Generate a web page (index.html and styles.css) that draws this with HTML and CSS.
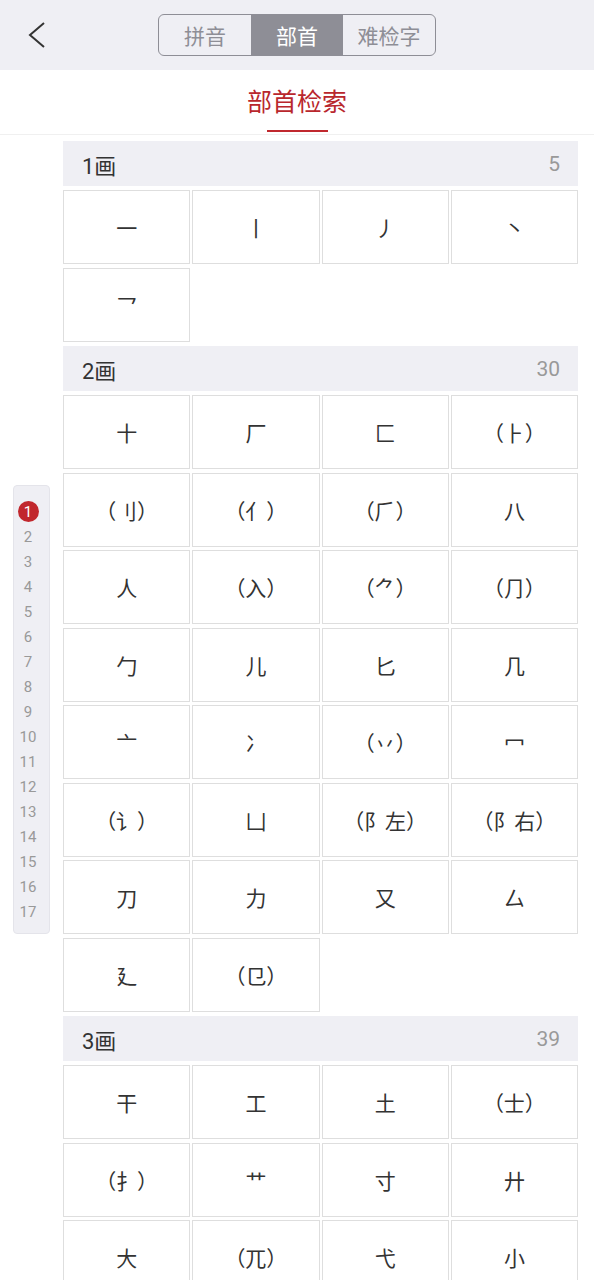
FILE: index.html
```html
<!DOCTYPE html>
<html lang="zh-CN">
  <head>
    <meta charset="UTF-8" />
    <meta name="viewport" content="width=device-width, initial-scale=1.0" />
    <title>部首检索</title>
    <link rel="stylesheet" href="styles.css">
  </head>
  <body>
    <div class="topbar">
      <button class="back">
        <svg width="22" height="30" viewBox="0 0 22 30"><path d="M18 3 L4 15 L18 27" fill="none" stroke="#333" stroke-width="2"/></svg>
      </button>
      <div class="segments">
        <span class="seg">拼音</span>
        <span class="seg seg-active">部首</span>
        <span class="seg">难检字</span>
      </div>
    </div>

    <div class="title">
      <span class="title-text">部首检索</span>
    </div>

    <div class="content">
      <div class="section">
        <div class="section-head"><span class="strokes">1画</span><span class="count">5</span></div>
        <div class="grid">
          <div class="cell">一</div>
          <div class="cell">丨</div>
          <div class="cell">丿</div>
          <div class="cell">丶</div>
          <div class="cell">乛</div>
        </div>
      </div>

      <div class="section">
        <div class="section-head"><span class="strokes">2画</span><span class="count">30</span></div>
        <div class="grid">
          <div class="cell">十</div>
          <div class="cell">厂</div>
          <div class="cell">匚</div>
          <div class="cell">（⺊）</div>
          <div class="cell">（刂）</div>
          <div class="cell">（亻）</div>
          <div class="cell">（⺁）</div>
          <div class="cell">八</div>
          <div class="cell">人</div>
          <div class="cell">（入）</div>
          <div class="cell">（⺈）</div>
          <div class="cell">（⺆）</div>
          <div class="cell">勹</div>
          <div class="cell">儿</div>
          <div class="cell">匕</div>
          <div class="cell">几</div>
          <div class="cell">亠</div>
          <div class="cell">冫</div>
          <div class="cell">（丷）</div>
          <div class="cell">冖</div>
          <div class="cell">（讠）</div>
          <div class="cell">凵</div>
          <div class="cell">（阝左）</div>
          <div class="cell">（阝右）</div>
          <div class="cell">刀</div>
          <div class="cell">力</div>
          <div class="cell">又</div>
          <div class="cell">厶</div>
          <div class="cell">廴</div>
          <div class="cell">（㔾）</div>
        </div>
      </div>

      <div class="section">
        <div class="section-head"><span class="strokes">3画</span><span class="count">39</span></div>
        <div class="grid">
          <div class="cell">干</div>
          <div class="cell">工</div>
          <div class="cell">土</div>
          <div class="cell">（士）</div>
          <div class="cell">（扌）</div>
          <div class="cell">艹</div>
          <div class="cell">寸</div>
          <div class="cell">廾</div>
          <div class="cell">大</div>
          <div class="cell">（兀）</div>
          <div class="cell">弋</div>
          <div class="cell">小</div>
        </div>
      </div>
    </div>

    <div class="index">
      <span class="idx idx-active">1</span>
      <span class="idx">2</span>
      <span class="idx">3</span>
      <span class="idx">4</span>
      <span class="idx">5</span>
      <span class="idx">6</span>
      <span class="idx">7</span>
      <span class="idx">8</span>
      <span class="idx">9</span>
      <span class="idx">10</span>
      <span class="idx">11</span>
      <span class="idx">12</span>
      <span class="idx">13</span>
      <span class="idx">14</span>
      <span class="idx">15</span>
      <span class="idx">16</span>
      <span class="idx">17</span>
    </div>
  </body>
</html>
```

FILE: styles.css
```css
body {
  margin: 0;
  background-color: #fff;
  font-family: Roboto, "Noto Sans CJK SC", sans-serif;
  color: #333;
}
.topbar {
  height: 70px;
  background-color: #efeff4;
  display: flex;
  align-items: center;
  justify-content: center;
  position: relative;
}
.back {
  position: absolute;
  left: 26px;
  top: 20px;
  padding: 0;
  border: none;
  background-color: transparent;
}
.segments {
  display: flex;
  height: 40px;
  border: 1.5px solid #8e8e96;
  border-radius: 6px;
  overflow: hidden;
}
.seg {
  width: 92px;
  display: flex;
  align-items: center;
  justify-content: center;
  font-size: 21px;
  color: #8e8e96;
  font-family: "Noto Sans CJK SC", sans-serif;
}
.seg-active {
  background-color: #8e8e96;
  color: #fff;
}
.title {
  height: 64px;
  border-bottom: 1px solid #f0f0f0;
  display: flex;
  justify-content: center;
}
.title-text {
  font-family: "Noto Sans CJK SC", sans-serif;
  font-size: 25px;
  color: #b9272d;
  padding: 12px 2px 0 2px;
  height: 48px;
  line-height: 36px;
  box-sizing: content-box;
  border-bottom: 2px solid #c0282e;
  width: 57px;
  white-space: nowrap;
  display: flex;
  justify-content: center;
}
.content {
  padding: 6px 16px 0 63px;
}
.section {
  margin-bottom: 4.5px;
}
.section-head {
  height: 45px;
  background-color: #efeff4;
  display: flex;
  align-items: center;
  justify-content: space-between;
  padding: 0 18px 0 19px;
  margin-bottom: 4px;
}
.strokes {
  font-size: 22px;
  color: #333;
}
.count {
  font-size: 21px;
  color: #999;
}
.grid {
  display: grid;
  grid-template-columns: repeat(4, 1fr);
  column-gap: 2px;
  row-gap: 3.5px;
}
.cell {
  height: 74px;
  box-sizing: border-box;
  border: 1px solid #dedede;
  display: flex;
  align-items: center;
  justify-content: center;
  font-family: "Noto Sans CJK SC", sans-serif;
  font-size: 21px;
  color: #333;
}
.index {
  position: fixed;
  left: 13px;
  top: 485px;
  width: 37px;
  height: 449px;
  box-sizing: border-box;
  padding: 13px 7px 0 0;
  background-color: #efeff4;
  border: 1px solid #e4e4ea;
  border-radius: 4px;
  display: flex;
  flex-direction: column;
  align-items: center;
}
.idx {
  height: 25px;
  display: flex;
  align-items: center;
  justify-content: center;
  font-size: 15px;
  color: #999;
}
.idx-active {
  width: 21px;
  height: 21px;
  margin: 2px 0;
  border-radius: 50%;
  background-color: #c1272d;
  color: #fff;
}
```
